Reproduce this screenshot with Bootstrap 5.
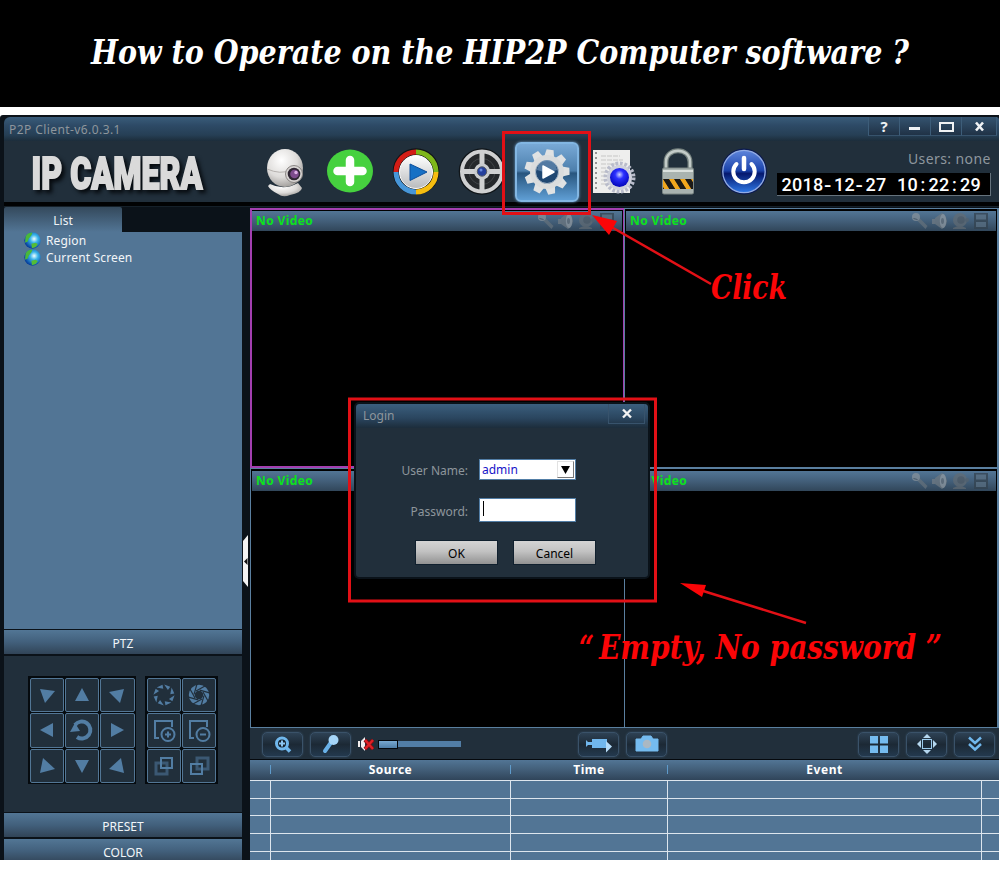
<!DOCTYPE html>
<html lang="en">
<head>
  <meta charset="UTF-8" />
  <title>How to Operate on the HIP2P Computer software</title>
  <meta name="viewport" content="width=device-width, initial-scale=1" />
  <!-- Bootstrap 5 -->
  <link href="https://cdn.jsdelivr.net/npm/bootstrap@5.3.0/dist/css/bootstrap.min.css" rel="stylesheet" />
  <style>
    body {
      width: 1000px;
      height: 874px;
      overflow: hidden;
      background: #fff;
      font-family: "Noto Sans", "Open Sans", sans-serif;
      font-size: 12px;
      line-height: 16px;
    }
    svg { display: block; flex-shrink: 0; overflow: visible; }
    .banner { height: 107px; background: #000; margin-bottom: 8px; }
    .serif-text {
      font-family: "DejaVu Serif Condensed", "DejaVu Serif", serif;
      font-weight: 700;
      font-style: italic;
    }
    .client {
      width: 999px;
      height: 745px;
      background: #0b1219;
      overflow: hidden;
      padding: 2px 0 0 4px;
      border-top-left-radius: 3px;
    }
    /* title bar */
    .title-strip {
      height: 24px;
      background: linear-gradient(#395c7a, #2d4a66 35%, #263f55 75%, #1c2d3b);
      border-radius: 6px 3px 0 0;
      color: #8e969c;
      padding-left: 5px;
    }
    .app-name { padding-top: 5px; letter-spacing: .42px; }
    .win-btn {
      width: 31px;
      height: 19px;
      border-left: 1px solid #3d5d79;
      border-bottom: 1px solid #37536c;
      background: linear-gradient(#34536f, #203246);
      color: #eef1f4;
      font-size: 15px;
      font-weight: 700;
      line-height: 19px;
      text-align: center;
    }
    .win-btn-last { width: 36px; border-right: 1px solid #3d5d79; margin-right: 2px; }
    .tool-strip { height: 61px; background: #212f3b; }
    .logo-box { width: 248px; }
    .tool-cell { width: 65.6px; height: 61px; }
    .tool-active {
      width: 64px;
      height: 60px;
      border-radius: 6px;
      border: 2px solid #82b6e2;
      background: linear-gradient(#78a9d6, #4d7fac 48%, #28557e 52%, #5f9ed4);
      box-shadow: 0 0 3px #6da4d4;
    }
    .users-text { font-size: 14px; color: #8e979e; line-height: 20px; letter-spacing: .4px; padding-top: 1px; }
    .clock-box {
      width: 214px;
      height: 23px;
      background: #000;
      border-right: 1px solid #66737d;
      border-bottom: 1px solid #66737d;
    }
    .divider-line { height: 5px; background: #010203; border-bottom: 1px solid #152029; }
    /* sidebar */
    .side-col { width: 238px; }
    .side-tab {
      width: 118px;
      height: 25px;
      background: linear-gradient(#34495c, #527595);
      color: #eef3f7;
      border-radius: 2px 2px 0 0;
      line-height: 28px;
    }
    .tree-box { height: 397px; background: #527595; color: #f2f6f9; padding-left: 20px; margin-bottom: 1px; }
    .tree-item { height: 17px; gap: 5px; letter-spacing: .15px; }
    .fold-bar {
      height: 24px;
      background: linear-gradient(#527695, #42607c 50%, #314457);
      color: #f2f6f9;
      line-height: 27px;
    }
    .fold-gap { height: 2px; }
    .ptz-box { height: 156px; background: #212f3b; margin: 2px 0 1px; padding: 20px 24px; gap: 9px; }
    .pad {
      display: grid;
      grid-auto-rows: 35.5px;
      background: #050a0e;
      padding: 1px;
      height: 108px;
    }
    .pad-3 { grid-template-columns: repeat(3, 35.4px); }
    .pad-2 { grid-template-columns: repeat(2, 35.4px); }
    .pad-key {
      border: 1px solid #527695;
      border-radius: 2px;
      background: #212f3b;
      margin: .5px;
    }
    .gutter { width: 8px; }
    .gutter-handle { width: 6px; height: 52px; margin-top: 328px; }
    /* video wall */
    .main-col { width: 749px; padding-top: 1px; }
    .wall {
      display: grid;
      grid-template-columns: 374px 375px;
      grid-template-rows: 260px 260px;
      height: 520px;
    }
    .pane { background: #000; border: 1px solid #5a7f9f; padding: 2px 1px; }
    .pane:nth-child(even) { border-right-width: 2px; }
    .pane:nth-child(odd) { border-right-width: 0; padding-right: 2px; }
    .wall .pane-picked { border: 2px solid #a33fb0; border-right-width: 1px; padding: 1px 1px 1px 0; }
    .pane-head {
      height: 20px;
      background: linear-gradient(#527595, #435f7a 50%, #31465a);
      color: #0ce31c;
      font-weight: 700;
      letter-spacing: .4px;
      padding-left: 4px;
      padding-right: 7px;
    }
    .control-strip { height: 32px; background: #212f3b; border-bottom: 1px solid #05090d; padding: 1px 4px 0 12px; }
    .ctl {
      width: 41px;
      height: 25px;
      border: 1px solid #3a5269;
      border-radius: 5px;
      background: linear-gradient(#2e4255, #1c2935 50%, #23394e);
      box-shadow: 0 0 2px #385066;
      flex-shrink: 0;
    }
    .ctl-set { gap: 7px; }
    .slider-track { width: 83px; height: 6px; background: #527ea6; margin-left: 4px; }
    .slider-knob {
      width: 20px;
      height: 9px;
      border: 1px solid #04080c;
      background: linear-gradient(#78a9d1, #4f7ea7);
    }
    .mid-set { margin-right: 191px; }
    /* event log */
    .log-grid { display: grid; grid-template-columns: 21px 240px 157px 314px 17px; }
    .log-head {
      height: 20px;
      background: linear-gradient(#527595, #425e78 50%, #30455a);
      color: #fff;
      font-weight: 700;
      letter-spacing: .55px;
      line-height: 20px;
      text-align: center;
    }
    .log-head > div { padding-right: 1px; background: linear-gradient(#5f9bcb, #5f9bcb) right 5px / 1px 9px no-repeat; }
    .log-row { height: 17.7px; border-top: 1px solid #dde6ee; background: #527595; }
    .log-row > div { border-right: 1px solid #dde6ee; }
    .log-row > div:last-child, .log-head > div:last-child, .log-head > div:nth-child(4) { background: none; }
    .log-row > div:last-child { border: 0; }
    /* login window */
    .login-win {
      position: absolute;
      left: 354px;
      top: 402px;
      width: 296px;
      height: 177px;
      background: #212f3b;
      border: 2px solid #0a1219;
      border-radius: 5px;
      color: #8e969c;
    }
    .login-title {
      height: 24px;
      background: linear-gradient(#3b5f7e, #2a455e 60%, #1c2d3b);
      border-radius: 4px 4px 0 0;
      padding-left: 7px;
      line-height: 23px;
    }
    .login-close { width: 37px; height: 20px; border: 1px solid #38536c; border-top: 0; margin-right: 3px; }
    .login-form {
      display: grid;
      grid-template-columns: 112px 97px;
      column-gap: 11px;
      row-gap: 18px;
      padding-top: 31px;
      align-items: center;
      text-align: right;
    }
    .login-label { padding-top: 2px; }
    .field { height: 21px; border: 1px solid #527ea6; background: #fff; color: #1613c8; padding: 0 1px 0 2px; text-align: left; }
    .field-pass { height: 24px; }
    .drop-arrow { width: 17px; height: 17px; border: 1px solid #e2e2e2; border-right-color: #777; border-bottom-color: #777; }
    .caret-bar { width: 1px; height: 15px; background: #000; margin: 2px 0 0 1px; }
    .btn-line { gap: 15px; padding: 18px 0 0 59px; }
    .gray-btn {
      width: 83px;
      height: 25px;
      border: 1px solid #10202e;
      background: linear-gradient(#d4d4d4, #c2c2c2 45%, #929292);
      color: #000;
      line-height: 25px;
      text-align: center;
    }
    .notes { position: absolute; left: 0; top: 0; pointer-events: none; }
  </style>
</head>
<body>

  <!-- shared glyphs -->
  <svg width="0" height="0" class="position-absolute">
    <defs>
      <linearGradient id="metal" x1="0" y1="0" x2="0" y2="1">
        <stop offset="0" stop-color="#ffffff" /><stop offset="1" stop-color="#b9bbbd" />
      </linearGradient>
      <radialGradient id="globe" cx=".6" cy=".4" r=".6">
        <stop offset="0" stop-color="#f0ffff" /><stop offset=".4" stop-color="#39b4ea" /><stop offset="1" stop-color="#06409c" />
      </radialGradient>
      <radialGradient id="whiteball" cx=".4" cy=".3" r=".8">
        <stop offset="0" stop-color="#fff" /><stop offset=".55" stop-color="#dedcda" /><stop offset="1" stop-color="#8f8c89" />
      </radialGradient>
      <linearGradient id="powerblue" x1="0" y1="0" x2="0" y2="1">
        <stop offset="0" stop-color="#5f86dc" /><stop offset=".48" stop-color="#1b43ab" /><stop offset=".55" stop-color="#05186e" /><stop offset="1" stop-color="#2f79e6" />
      </linearGradient>
      <radialGradient id="orb" cx=".5" cy=".35" r=".65">
        <stop offset="0" stop-color="#cfd6ff" /><stop offset=".35" stop-color="#2b30ff" /><stop offset="1" stop-color="#0204b8" />
      </radialGradient>
      <pattern id="hazard" width="11" height="20" patternUnits="userSpaceOnUse" patternTransform="skewX(32)">
        <rect width="11" height="20" fill="#1c1a17" /><rect width="5" height="20" fill="#f2a71d" />
      </pattern>
      <symbol id="globe-icon" viewBox="0 0 16 16">
        <circle cx="8" cy="8" r="7.700" fill="url(#globe)" />
        <path d="M1.500 4C3 1.500 5.500.500 8 .500L7 3 4.500 6 3.500 9 1 10Z" fill="#4ab83a" />
        <path d="M7 11l4-1 2 1.500-2 2.700-3.500 1Z" fill="#54bd35" />
      </symbol>
      <symbol id="pane-tools" viewBox="0 0 78 18">
        <g opacity=".7">
          <path d="M6 8.500l2.500-2.500 8 8-2 3Z" fill="#66727c" /><circle cx="5" cy="5" r="4" fill="#8a949c" />
          <path d="M2.500 6.500l4 1" stroke="#48545f" />
          <path d="M21 7h4v5h-4Z" fill="#737d85" /><path d="M24 6l7-5q4 2 5 8-1 6-5 8l-7-5Z" fill="#707a82" /><ellipse cx="32" cy="9" rx="3.200" ry="7" fill="#969fa6" /><ellipse cx="31.500" cy="9" rx="1.500" ry="3" fill="#68737c" />
          <circle cx="49" cy="8" r="7" fill="#626c74" /><circle cx="50" cy="8" r="3.800" fill="#515b64" /><path d="M42 16q7-4 13 0v1H42Z" fill="#626b72" /><circle cx="56" cy="8" r="2" fill="#56626d" />
          <path d="M63 1h14v16H63Z" fill="#33414d" /><path d="M65 2.500h10v5h-10ZM65 10h10v5h-10Z" fill="#5a6f81" />
        </g>
      </symbol>
    </defs>
  </svg>

  <header class="banner">
    <svg width="1000" height="107">
      <text x="91" y="63.500" textLength="818" lengthAdjust="spacingAndGlyphs" font-size="34" fill="#fff" class="serif-text">How to Operate on the HIP2P Computer software ?</text>
    </svg>
  </header>

  <main class="client">
    <div class="title-strip d-flex justify-content-between">
      <span class="app-name">P2P Client-v6.0.3.1</span>
      <div class="d-flex">
        <div class="win-btn">?</div>
        <div class="win-btn"><svg width="30" height="18"><path d="M9 10h11v3H9Z" fill="#f0f2f4" /></svg></div>
        <div class="win-btn"><svg width="30" height="18"><rect x="9" y="6" width="13" height="8" fill="none" stroke="#f0f2f4" stroke-width="2" /></svg></div>
        <div class="win-btn win-btn-last"><svg width="34" height="18"><path d="M14 5.500l7 8M21 5.500l-7 8" stroke="#f0f2f4" stroke-width="2.600" /></svg></div>
      </div>
    </div>

    <div class="tool-strip d-flex align-items-center">
      <div class="logo-box">
        <svg width="248" height="61">
          <text x="27.500" y="47.500" textLength="171" lengthAdjust="spacingAndGlyphs" font-family="Roboto, sans-serif" font-weight="900" font-size="45" fill="#dadada" stroke="#dadada" stroke-width="2" filter="drop-shadow(3px 3px 2px #05090d)">IP CAMERA</text>
        </svg>
      </div>

      <div class="tool-cell d-flex align-items-center justify-content-center">
        <svg width="44" height="50" viewBox="0 0 44 50">
          <path d="M7 37q14 7 28-1l4 5q-1 5-12 7-7 3-12-1-8-4-10-8Z" fill="url(#whiteball)" />
          <ellipse cx="22" cy="21" rx="18" ry="19" fill="url(#whiteball)" />
          <path d="M4 22q14 6 23 1" fill="none" stroke="#b5b1ae" />
          <circle cx="31" cy="27" r="8.500" fill="#d8d5d3" stroke="#8a8684" />
          <circle cx="31" cy="27" r="6.300" fill="#302734" />
          <circle cx="31.500" cy="27" r="4.300" fill="#7d4b8c" /><circle cx="33" cy="25.500" r="1.700" fill="#dcaee5" />
        </svg>
      </div>
      <div class="tool-cell d-flex align-items-center justify-content-center">
        <svg width="50" height="50" viewBox="0 0 50 50">
          <ellipse cx="25" cy="24" rx="23" ry="21.500" fill="#46d13f" />
          <path d="M25 13v22M12.500 24h25" stroke="#fff" stroke-width="8.500" stroke-linecap="round" />
        </svg>
      </div>
      <div class="tool-cell d-flex align-items-center justify-content-center">
        <svg width="50" height="50" viewBox="0 0 50 50">
          <circle cx="25" cy="24.500" r="23.300" fill="#101417" />
          <g fill="none" stroke-width="5">
            <path d="M5 25A20 20 0 0 1 25 5" stroke="#d31d16" /><path d="M25 5A20 20 0 0 1 45 25" stroke="#7eb71b" />
            <path d="M45 25A20 20 0 0 1 25 45" stroke="#f6bd10" /><path d="M25 45A20 20 0 0 1 5 25" stroke="#4796d8" />
          </g>
          <circle cx="25" cy="25" r="16.500" fill="url(#metal)" stroke="#fff" />
          <path d="M19 17l17 8-17 8.500Z" fill="#1670c5" stroke="#0c4f9c" />
        </svg>
      </div>
      <div class="tool-cell d-flex align-items-center justify-content-center">
        <svg width="50" height="50" viewBox="0 0 50 50">
          <circle cx="25" cy="24.500" r="23.300" fill="#101519" />
          <circle cx="25" cy="24.500" r="20" fill="#25282b" stroke="#cfd0d1" stroke-width="4" />
          <circle cx="25" cy="24.500" r="13" fill="none" stroke="#464a4e" stroke-width=".8" />
          <path d="M25 5v13M25 31v13M5 24.500h13M32 24.500h13" stroke="#cfd0d1" stroke-width="5" />
          <circle cx="25" cy="24.500" r="8" fill="#c9cbcd" /><circle cx="25" cy="24.500" r="4.700" fill="#243f9c" stroke="#555c65" /><circle cx="24" cy="23" r="1.500" fill="#6788dd" />
        </svg>
      </div>
      <div class="tool-cell d-flex align-items-center justify-content-center">
        <div class="tool-active d-flex align-items-center justify-content-center">
          <svg width="50" height="50" viewBox="-25 -25 50 50">
            <g id="teeth"></g>
            <circle r="17" fill="#dadcdd" />
            <circle r="11.500" fill="#1f4772" stroke="#a9b9c9" />
            <path d="M-10-2A10 10 0 0 1 10-2Q0 2-10-2Z" fill="#6087ae" opacity=".8" />
            <path d="M-4-6L7 0-4 6Z" fill="#fff" stroke="#fff" stroke-width="1.500" stroke-linejoin="round" />
          </svg>
        </div>
      </div>
      <div class="tool-cell d-flex align-items-center justify-content-center">
        <svg width="46" height="48" viewBox="0 0 46 48">
          <path d="M3 2h37v43H3Z" fill="#eeeeed" />
          <path d="M6 4v38" stroke="#777" stroke-width="1.500" stroke-dasharray="2 3" />
          <path d="M11 8h19M11 12h22M11 16h18M11 20h15M11 24h9M11 28h7M11 32h6M11 36h7" stroke="#c5c5c5" stroke-width="1.200" stroke-dasharray="5 1" />
          <g transform="translate(29.500 29.500)">
            <circle r="14" fill="none" stroke="#b9bccb" stroke-width="4" stroke-dasharray="2.700 1.700" />
            <circle r="12.500" fill="#cfd1dc" /><circle r="9.500" fill="url(#orb)" />
          </g>
        </svg>
      </div>
      <div class="tool-cell d-flex align-items-center justify-content-center">
        <svg width="36" height="50" viewBox="0 0 36 50">
          <path d="M6 25V15C6 0 30 0 30 15v10" fill="none" stroke="#76827f" stroke-width="5" />
          <path d="M6 25V15C6 0 30 0 30 15v10" fill="none" stroke="#c3cbc8" stroke-width="2.500" />
          <rect x="2.500" y="21" width="31" height="26" rx="1.500" fill="#a9b3b0" stroke="#7c8785" />
          <path d="M3 24h30" stroke="#dbe1de" stroke-width="2" />
          <rect x="3" y="32" width="30" height="10" fill="url(#hazard)" />
        </svg>
      </div>
      <div class="tool-cell d-flex align-items-center justify-content-center">
        <svg width="50" height="50" viewBox="0 0 50 50">
          <circle cx="25" cy="24.500" r="23" fill="#0b1a50" /><circle cx="25" cy="24.500" r="21.200" fill="url(#powerblue)" stroke="#91abe4" stroke-width="1.300" />
          <path d="M17.500 17A10.700 10.700 0 1 0 32.500 17" fill="none" stroke="#fff" stroke-width="4" stroke-linecap="round" />
          <path d="M25 11v11" stroke="#fff" stroke-width="4.500" stroke-linecap="round" />
        </svg>
      </div>

      <div class="d-flex flex-column align-items-end">
        <span class="users-text pb-1">Users: none</span>
        <div class="clock-box">
          <svg width="213" height="22">
            <text id="clockText" y="18" font-family="Roboto, sans-serif" font-size="18" fill="#fff"></text>
          </svg>
        </div>
      </div>
    </div>
    <div class="divider-line"></div>

    <div class="d-flex">
      <aside class="side-col">
        <div class="side-tab text-center">List</div>
        <div class="tree-box">
          <div class="tree-item d-flex align-items-center"><svg width="17" height="17"><use href="#globe-icon" width="17" height="17" /></svg>Region</div>
          <div class="tree-item d-flex align-items-center"><svg width="17" height="17"><use href="#globe-icon" width="17" height="17" /></svg>Current Screen</div>
        </div>
        <div class="fold-bar text-center">PTZ</div>
        <div class="ptz-box d-flex">
          <div class="pad pad-3" id="ptzPad"></div>
          <div class="pad pad-2" id="lensPad"></div>
        </div>
        <div class="fold-bar text-center">PRESET</div>
        <div class="fold-gap"></div>
        <div class="fold-bar text-center">COLOR</div>
      </aside>

      <div class="gutter">
        <svg class="gutter-handle" viewBox="0 0 6 52"><path d="M6 0v52L1 46V6Z" fill="#f4f4f4" /><path d="M5.500 23v7L2 26.500Z" fill="#111" /></svg>
      </div>

      <section class="main-col">
        <div class="wall" id="wall"></div>

        <div class="control-strip d-flex align-items-center">
          <div class="ctl-set d-flex align-items-center">
            <div class="ctl d-flex align-items-center justify-content-center">
              <svg width="18" height="17" viewBox="0 0 18 17"><circle cx="8" cy="7.500" r="5.500" fill="#15212c" stroke="#70b7ec" stroke-width="3" /><path d="M12 11.500l4 4" stroke="#70b7ec" stroke-width="3.500" /><path d="M8 4.500v6M5 7.500h6" stroke="#8cc6f2" stroke-width="2" /></svg>
            </div>
            <div class="ctl d-flex align-items-center justify-content-center">
              <svg width="18" height="20" viewBox="0 0 18 20"><path d="M3 17l6-8.500" stroke="#69b1e8" stroke-width="4" stroke-linecap="round" /><circle cx="11.500" cy="6" r="5" fill="#a5d5f8" /></svg>
            </div>
            <svg width="16" height="16" viewBox="0 0 16 16"><path d="M0 5h2v6H0ZM3 5l4-4v14L3 11Z" fill="#f3eeee" /><path d="M7 4l8 9M15 4l-8 9" stroke="#7e0f11" stroke-width="4" /><path d="M7 4l8 9M15 4l-8 9" stroke="#df2127" stroke-width="2.300" /></svg>
          </div>
          <div class="slider-track d-flex align-items-center"><div class="slider-knob"></div></div>
          <div class="ctl-set mid-set d-flex ms-auto">
            <div class="ctl d-flex align-items-center justify-content-center">
              <svg width="26" height="17" viewBox="0 0 26 17"><path d="M6 3h15v9H6ZM0 4l2 2h4v3H2L0 11Z" fill="#71b7ed" /><path d="M20 5l6 5.500-6 6Z" fill="#b6dcf8" /></svg>
            </div>
            <div class="ctl d-flex align-items-center justify-content-center">
              <svg width="24" height="18" viewBox="0 0 24 18"><path d="M1 4h5l2-3h8l2 3h5v12H1Z" fill="#75bbef" stroke="#75bbef" stroke-linejoin="round" /><circle cx="12" cy="9" r="4.300" fill="#aab8c3" /></svg>
            </div>
          </div>
          <div class="ctl-set d-flex">
            <div class="ctl d-flex align-items-center justify-content-center">
              <svg width="18" height="17"><path d="M0 0h8v7.500H0ZM10 0h8v7.500h-8ZM0 9.500h8V17H0ZM10 9.500h8V17h-8Z" fill="#75bbef" /></svg>
            </div>
            <div class="ctl d-flex align-items-center justify-content-center">
              <svg width="22" height="20" viewBox="0 0 22 20"><rect x="6.500" y="5.500" width="9" height="9" fill="none" stroke="#9bcbed" /><path d="M7 4L11 0l4 4ZM7 16L11 20l4-4ZM5 6L1 10l4 4ZM17 6l4 4-4 4Z" fill="#b5d7ef" /></svg>
            </div>
            <div class="ctl d-flex align-items-center justify-content-center">
              <svg width="16" height="16" viewBox="0 0 16 16"><path d="M2 1.500l6 5.500 6-5.500M2 8l6 5.500L14 8" fill="none" stroke="#70b7ec" stroke-width="2.500" /></svg>
            </div>
          </div>
        </div>

        <div class="log-grid log-head"><div></div><div>Source</div><div>Time</div><div>Event</div><div></div></div>
        <div id="logRows"></div>
      </section>
    </div>
  </main>

  <div class="login-win">
    <div class="login-title d-flex justify-content-between">Login
      <div class="login-close"><svg width="36" height="19"><path d="M14 5.500l8 8M22 5.500l-8 8" stroke="#f3f3f3" stroke-width="2.400" /></svg></div>
    </div>
    <div class="login-form">
      <span class="login-label">User Name:</span>
      <div class="field d-flex align-items-center justify-content-between">admin
        <span class="drop-arrow"><svg width="15" height="15"><path d="M3 4h9l-4.500 8Z" fill="#000" /></svg></span>
      </div>
      <span class="login-label pt-1">Password:</span>
      <div class="field field-pass"><div class="caret-bar"></div></div>
    </div>
    <div class="d-flex btn-line">
      <div class="gray-btn">OK</div>
      <div class="gray-btn">Cancel</div>
    </div>
  </div>

  <!-- red notes drawn over the client -->
  <svg class="notes" width="1000" height="874">
    <g fill="none" stroke="#e21016" stroke-width="3">
      <rect x="503.500" y="132.500" width="86" height="81" />
      <rect x="349.500" y="399" width="306" height="202" />
      <path d="M608 225l103 59M700 590l106 33" stroke-width="2.500" />
    </g>
    <path d="M592 215l25 6-8 14ZM680 583l26 2-4 12Z" fill="#fb0507" />
    <g class="serif-text" font-size="34" fill="#fb0507">
      <text x="711" y="298.500" textLength="76" lengthAdjust="spacingAndGlyphs">Click</text>
      <text x="579" y="658.500" textLength="15" lengthAdjust="spacingAndGlyphs">“</text>
      <text x="599" y="658.500" textLength="343" lengthAdjust="spacingAndGlyphs">Empty, No password ”</text>
    </g>
  </svg>

  <script src="https://cdn.jsdelivr.net/npm/bootstrap@5.3.0/dist/js/bootstrap.bundle.min.js"></script>
  <script>
    // clock digits sit on a fixed pitch, the dashes are wider than the digits' own
    document.getElementById('clockText').innerHTML = [...'2018-12-27 10:22:29'].map((ch, i) => {
      const left = 4.5 + i * 10.5;
      if (ch === '-') return `<tspan x="${left + 1}" y="19.500" font-size="23">-</tspan>`;
      return `<tspan x="${ch === ':' ? left + 2.5 : left}" y="18" font-weight="500">${ch}</tspan>`;
    }).join('');

    // gear teeth
    let teeth = '';
    for (let i = 0; i < 9; i++) {
      teeth += `<path d="M-5-15L-3.500-22.500H3.500L5-15Z" fill="#e0e2e3" transform="rotate(${i * 40 + 8})" />`;
    }
    document.getElementById('teeth').innerHTML = teeth;

    const tri = (d) => `<path d="${d}" fill="#527da3" />`;
    const keys = [
      tri('M-7-6L8-4-2 8Z'), tri('M-7 6L0-7 7 6Z'), tri('M7-6L-8-3 3 8Z'),
      tri('M6-7L-7 0 6 7Z'),
      '<path d="M-7-5A8.500 8.500 0 1 1-5 7" fill="none" stroke="#527da3" stroke-width="4" />' + tri('M-12 2l5-9 5 8Z'),
      tri('M-6-7L7 0-6 7Z'),
      tri('M-4-8L8 3-7 7Z'), tri('M-7-6L0 7 7-6Z'), tri('M4-8L-8 3 7 7Z')
    ];

    let openBlades = '';
    let cuts = '';
    for (let i = 0; i < 8; i++) {
      openBlades += `<path d="M-3.500-10L3-10 2-6Z" fill="#527da3" transform="rotate(${i * 45 + 20})" />`;
      cuts += `<path d="M-3-4L6-9" stroke="#212f3b" stroke-width="1.200" transform="rotate(${i * 45})" />`;
    }
    const frame = '<path d="M-5 8H-9V-9H8V-3" fill="none" stroke="#527da3" stroke-width="2" /><circle cx="4" cy="4.500" r="6.500" fill="#212f3b" stroke="#527da3" stroke-width="2" />';
    const lens = [
      openBlades,
      `<circle r="7.200" fill="none" stroke="#527da3" stroke-width="6" />${cuts}`,
      frame + '<path d="M1 4.500h6M4 1.500v6" stroke="#527da3" stroke-width="2" />',
      frame + '<path d="M1 4.500h6" stroke="#527da3" stroke-width="2" />',
      '<rect x="-8" y="-3" width="11" height="11" fill="none" stroke="#3b5873" stroke-width="3" /><rect x="-3" y="-8" width="11" height="10" fill="none" stroke="#527da3" stroke-width="2" />',
      '<rect x="-2" y="-8" width="11" height="11" fill="none" stroke="#3b5873" stroke-width="3" /><rect x="-8" y="-2" width="11" height="10" fill="none" stroke="#527da3" stroke-width="2" />'
    ];
    function fillPad(id, list) {
      document.getElementById(id).innerHTML = list.map(g =>
        `<div class="pad-key d-flex align-items-center justify-content-center"><svg width="26" height="26" viewBox="-13 -13 26 26">${g}</svg></div>`
      ).join('');
    }
    fillPad('ptzPad', keys);
    fillPad('lensPad', lens);

    const wall = document.getElementById('wall');
    for (let i = 0; i < 4; i++) {
      wall.innerHTML += `
        <div class="pane ${i === 0 ? 'pane-picked' : ''}">
          <div class="pane-head d-flex justify-content-between align-items-center">
            <span>No Video</span>
            <svg width="78" height="18"><use href="#pane-tools" width="78" height="18" /></svg>
          </div>
        </div>`;
    }

    document.getElementById('logRows').innerHTML =
      '<div class="log-grid log-row"><div></div><div></div><div></div><div></div><div></div></div>'.repeat(5);
  </script>

</body>
</html>
